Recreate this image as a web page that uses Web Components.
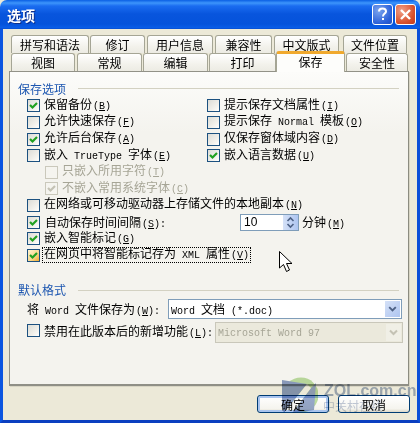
<!DOCTYPE html>
<html lang="zh">
<head>
<meta charset="utf-8">
<title>选项</title>
<style>
  html, body { margin: 0; padding: 0; background: #ece9d8; }
  body { width: 420px; height: 423px; overflow: hidden; }
</style>
</head>
<body>
<xp-window caption="选项">
  <xp-tabs></xp-tabs>
  <xp-panel>
    <xp-group label="保存选项"></xp-group>
    <xp-options>
      <xp-check checked>保留备份<x-l k>(<u>B</u>)</x-l></xp-check>
      <xp-check col="2">提示保存文档属性<x-l k>(<u>I</u>)</x-l></xp-check>
      <xp-check>允许快速保存<x-l k>(<u>F</u>)</x-l></xp-check>
      <xp-check col="2">提示保存 <x-l>Normal</x-l> 模板<x-l k>(<u>O</u>)</x-l></xp-check>
      <xp-check checked>允许后台保存<x-l k>(<u>A</u>)</x-l></xp-check>
      <xp-check col="2">仅保存窗体域内容<x-l k>(<u>D</u>)</x-l></xp-check>
      <xp-check>嵌入 <x-l>TrueType</x-l> 字体<x-l k>(<u>E</u>)</x-l></xp-check>
      <xp-check col="2" checked>嵌入语言数据<x-l k>(<u>U</u>)</x-l></xp-check>
      <xp-check indent disabled wide>只嵌入所用字符<x-l k>(<u>T</u>)</x-l></xp-check>
      <xp-check indent disabled checked wide>不嵌入常用系统字体<x-l k>(<u>C</u>)</x-l></xp-check>
      <xp-check wide>在网络或可移动驱动器上存储文件的本地副本<x-l k>(<u>N</u>)</x-l></xp-check>
      <xp-autosave></xp-autosave>
      <xp-check wide checked>嵌入智能标记<x-l k>(<u>G</u>)</x-l></xp-check>
      <xp-check wide checked focused>在网页中将智能标记存为 <x-l>XML</x-l> 属性<x-l k>(<u>V</u>)</x-l></xp-check>
    </xp-options>
    <xp-group label="默认格式" class="second"></xp-group>
    <xp-defaults></xp-defaults>
  </xp-panel>
  <xp-footer></xp-footer>
</xp-window>
<xp-overlay></xp-overlay>

<script>
// word-spacing brings the 7.2px mono space down to the 6px half width of simsun
const FONT = `12px "Liberation Mono", "Noto Sans CJK SC", monospace; word-spacing: -1.2px`;

// latin runs: simsun half width is 6px so mono at 10px
class XL extends HTMLElement {
  constructor() {
    super();
    this.attachShadow({ mode: "open" }).innerHTML =
      `<style>:host { display: inline; font: 10px "Liberation Mono", monospace; word-spacing: 0; } :host([k]) { margin-left: 1px; }</style><slot></slot>`;
  }
}
customElements.define("x-l", XL);

class XpWindow extends HTMLElement {
  constructor() {
    super();
    this.attachShadow({ mode: "open" }).innerHTML = `
      <style>
        :host { display: flex; flex-direction: column; width: 420px; height: 423px; box-sizing: border-box;
          background: #ece9d8; font: ${FONT}; color: #000; }
        .title { height: 29px; flex: none; display: flex; align-items: center; padding: 0 4px 0 7px;
          background: linear-gradient(#0a5fe4 0, #3d95fb 3px, #1a6cf0 6px, #0855dd 14px, #0553db 24px, #0a5ee8 28px, #0648c8 29px);
          border-radius: 7px 7px 0 0; }
        .cap { flex: 1; color: #fff; font: bold 14px "Noto Sans CJK SC", sans-serif; text-shadow: 1px 1px 0 #0f2f8a; }
        .btn { width: 21px; height: 21px; box-sizing: border-box; border: 1px solid #fff; border-radius: 3px; margin-left: 2px; }
        .help { background: radial-gradient(circle at 30% 30%, #7ba4ee, #2a5fd8 70%, #2350c0); }
        .close { background: radial-gradient(circle at 30% 30%, #f0a088, #d9512c 65%, #c23a1a); }
        .btn svg { display: block; width: 19px; height: 19px; }
        .frame { flex: 1; display: flex; flex-direction: column; min-height: 0; box-sizing: border-box;
          border-left: 3px solid #0b55e0; border-right: 3px solid #0b4fd8; border-bottom: 3px solid #0a3fc0; padding: 6px 8px 0 6px; }
      </style>
      <div class="title">
        <span class="cap">${this.getAttribute("caption") || ""}</span>
        <div class="btn help"><svg viewBox="0 0 19 19"><path d="M6 6.5C6 4.5 7.5 3.5 9.5 3.5S13 4.6 13 6.4C13 8.4 10 8.8 10 11.4" fill="none" stroke="#fff" stroke-width="2"/><rect x="9" y="13" width="2" height="2" fill="#fff"/></svg></div>
        <div class="btn close"><svg viewBox="0 0 19 19"><path d="M5 5L14 14M14 5L5 14" stroke="#fff" stroke-width="2.4"/></svg></div>
      </div>
      <div class="frame"><slot></slot></div>`;
  }
}
customElements.define("xp-window", XpWindow);

class XpTabs extends HTMLElement {
  constructor() {
    super();
    // label, width, space after
    const row1 = [["拼写和语法", 78, 1], ["修订", 55, 2], ["用户信息", 66, 2], ["兼容性", 57, 2], ["中文版式", 65, 4], ["文件位置", 64, 0]];
    const row2 = [["视图", 64, 2], ["常规", 65, 1], ["编辑", 65, 1], ["打印", 67, 0], ["保存", 69, 1], ["安全性", 62, 0]];
    const tabs = r => r.map(([t, w, m]) => `<div class="tab${t === "保存" ? " on" : ""}" style="width:${w}px;margin-right:${m}px">${t}</div>`).join("");
    this.attachShadow({ mode: "open" }).innerHTML = `
      <style>
        :host { display: block; height: 36px; flex: none; position: relative; z-index: 1; }
        .row { display: flex; height: 18px; padding-left: 2px; }
        .tab { box-sizing: border-box; height: 18px; display: flex; align-items: center; justify-content: center;
          border: 1px solid #a5a595; border-bottom: 0; border-radius: 3px 3px 0 0;
          background: linear-gradient(#fff, #f3f2ec 60%, #ecebe3); font: ${FONT}; }
        .tab.on { height: 21px; margin-top: -2px; background: #fdfdfb; border-top: 3px solid #f0a92e; position: relative; z-index: 2; padding-bottom: 2px; }
      </style>
      <div class="row">${tabs(row1)}</div>
      <div class="row">${tabs(row2)}</div>`;
  }
}
customElements.define("xp-tabs", XpTabs);

class XpPanel extends HTMLElement {
  constructor() {
    super();
    this.attachShadow({ mode: "open" }).innerHTML = `
      <style>
        :host { display: block; box-sizing: border-box; width: 400px; height: 315px; flex: none;
          background: linear-gradient(#fcfcfa, #f4f3ee 60px);
          border: 1px solid #929288; border-right-color: #8b8b80; border-bottom: 2px solid #8f8f86;
          box-shadow: 1px 1px 0 #d8d5c4; padding: 8px 0 0 8px; }
      </style><slot></slot>`;
  }
}
customElements.define("xp-panel", XpPanel);

class XpGroup extends HTMLElement {
  constructor() {
    super();
    this.attachShadow({ mode: "open" }).innerHTML = `
      <style>
        :host { display: flex; align-items: center; height: 17px; width: 381px; }
        :host(.second) { margin-top: 18.4px; }
        span { color: #1c56b0; font: ${FONT}; }
        i { flex: 1; height: 1px; background: #d3d1c2; margin-left: 12px; }
      </style>
      <span>${this.getAttribute("label")}</span><i></i>`;
  }
}
customElements.define("xp-group", XpGroup);

class XpOptions extends HTMLElement {
  constructor() {
    super();
    this.attachShadow({ mode: "open" }).innerHTML = `
      <style>
        :host { display: grid; grid-template-columns: 180px 1fr; grid-auto-rows: 16.6px; margin: .6px 0 0 9px; }
      </style><slot></slot>`;
  }
}
customElements.define("xp-options", XpOptions);

class XpBox extends HTMLElement {
  constructor() {
    super();
    const on = this.hasAttribute("checked");
    this.attachShadow({ mode: "open" }).innerHTML = `
      <style>
        :host { display: block; width: 13px; height: 13px; flex: none; }
        .b { box-sizing: border-box; width: 13px; height: 13px; border: 1px solid #1c5180;
          background: linear-gradient(135deg, #dcdcd6, #f4f3ee 70%, #fff); }
        :host([hot]) .b { background: linear-gradient(135deg, #fff3d0, #f8d78a 60%, #f0a92e); }
        :host([disabled]) .b { border-color: #cac8bb; background: #f5f4ef; }
        svg { display: block; width: 11px; height: 11px; }
      </style>
      <div class="b">${on ? `<svg viewBox="0 0 11 11"><path d="M2 5L4.5 7.5L9 3" fill="none" stroke="${this.hasAttribute("disabled") ? "#c4c2b4" : "#21a121"}" stroke-width="2.2"/></svg>` : ""}</div>`;
  }
}
customElements.define("xp-box", XpBox);

class XpCheck extends HTMLElement {
  constructor() {
    super();
    const attr = n => this.hasAttribute(n) ? n : "";
    this.attachShadow({ mode: "open" }).innerHTML = `
      <style>
        :host { display: flex; align-items: center; gap: 3px; height: 100%; white-space: nowrap; font: ${FONT}; grid-column: 1; }
        :host([col="2"]) { grid-column: 2; }
        :host([wide]) { grid-column: 1 / -1; }
        :host([indent]) { margin-left: 18px; }
        :host([disabled]) { color: #a6a596; }
        .t { line-height: 14px; padding: 0 1px; }
        :host([focused]) .t { outline: 1px dotted #000; }
      </style>
      <xp-box ${attr("checked")} ${attr("disabled")} ${this.hasAttribute("focused") ? "hot" : ""}></xp-box>
      <span class="t"><slot></slot></span>`;
  }
}
customElements.define("xp-check", XpCheck);

class XpSpin extends HTMLElement {
  constructor() {
    super();
    this.attachShadow({ mode: "open" }).innerHTML = `
      <style>
        :host { display: flex; box-sizing: border-box; width: 59px; height: 17px; border: 1px solid #7f9db9; background: #fff; flex: none; }
        span { flex: 1; font: 12px "Liberation Sans", sans-serif; line-height: 15px; padding-left: 3px; }
        .u { width: 15px; background: linear-gradient(90deg, #d5e1f7, #aec5f0); }
        svg { display: block; }
      </style>
      <span><slot></slot></span>
      <div class="u"><svg width="15" height="15" viewBox="0 0 15 15"><path d="M4.5 6L7.5 3L10.5 6M4.5 9L7.5 12L10.5 9" fill="none" stroke="#4d6185" stroke-width="1.6"/></svg></div>`;
  }
}
customElements.define("xp-spin", XpSpin);

class XpAutosave extends HTMLElement {
  constructor() {
    super();
    this.attachShadow({ mode: "open" }).innerHTML = `
      <style>
        :host { display: flex; align-items: center; grid-column: 1 / -1; height: 100%; white-space: nowrap; font: ${FONT}; }
        .gap { width: 200px; flex: none; padding-left: 5px; box-sizing: border-box; }
        .after { margin-left: 3px; }
      </style>
      <xp-box checked></xp-box>
      <span class="gap">自动保存时间间隔<x-l k>(<u>S</u>):</x-l></span>
      <xp-spin>10</xp-spin>
      <span class="after">分钟<x-l k>(<u>M</u>)</x-l></span>`;
  }
}
customElements.define("xp-autosave", XpAutosave);

class XpSelect extends HTMLElement {
  constructor() {
    super();
    this.attachShadow({ mode: "open" }).innerHTML = `
      <style>
        :host { display: flex; box-sizing: border-box; border: 1px solid #7f9db9; background: #fff; white-space: nowrap; font: ${FONT}; }
        :host([disabled]) { border-color: #c9c7ba; background: #ebe9dc; color: #a6a596; }
        .v { flex: 1; display: flex; align-items: center; padding-left: 2px; }
        .a { width: 15px; margin: 1px; background: linear-gradient(135deg, #d5e1f7, #aec5f0); }
        :host([disabled]) .a { background: #f0efe6; }
        svg { display: block; width: 15px; height: 100%; }
      </style>
      <div class="v"><span><slot></slot></span></div>
      <div class="a"><svg viewBox="0 0 15 17"><path d="M4 6.5L7.5 10L11 6.5" fill="none" stroke="${this.hasAttribute("disabled") ? "#c4c2b4" : "#4d6185"}" stroke-width="2"/></svg></div>`;
  }
}
customElements.define("xp-select", XpSelect);

class XpDefaults extends HTMLElement {
  constructor() {
    super();
    this.attachShadow({ mode: "open" }).innerHTML = `
      <style>
        :host { display: grid; grid-template-rows: 21px 22px; row-gap: 2px; margin-left: 9px; white-space: nowrap; font: ${FONT}; }
        .r { display: flex; align-items: center; }
        .l1 { width: 141px; flex: none; }
        .w1 { width: 234px; height: 20px; }
        .l2 { display: flex; align-items: center; gap: 4px; width: 188px; flex: none; padding-bottom: 4px; box-sizing: border-box; }
        .w2 { width: 188px; height: 21px; }
      </style>
      <div class="r"><span class="l1">将 <x-l>Word</x-l> 文件保存为<x-l k>(<u>W</u>):</x-l></span><xp-select class="w1"><x-l>Word</x-l> 文档 <x-l>(*.doc)</x-l></xp-select></div>
      <div class="r"><span class="l2"><xp-box></xp-box><span>禁用在此版本后的新增功能<x-l k>(<u>L</u>):</x-l></span></span><xp-select class="w2" disabled><x-l>Microsoft Word 97</x-l></xp-select></div>`;
  }
}
customElements.define("xp-defaults", XpDefaults);

class XpFooter extends HTMLElement {
  constructor() {
    super();
    this.attachShadow({ mode: "open" }).innerHTML = `
      <style>
        :host { display: flex; justify-content: flex-end; gap: 9px; margin: 9px -1px 0 0; }
        button { box-sizing: border-box; width: 72px; height: 18px; padding: 0; font: ${FONT}; color: #000;
          border: 1px solid #003c74; border-radius: 3px; background: linear-gradient(#fff, #f5f4ee 80%, #dcd8c8); }
        .def { box-shadow: inset 0 0 0 2px #a9c4ee; }
      </style>
      <button class="def">确定</button><button>取消</button>`;
  }
}
customElements.define("xp-footer", XpFooter);

// mouse pointer and the site watermark lie over the dialog
class XpOverlay extends HTMLElement {
  constructor() {
    super();
    this.attachShadow({ mode: "open" }).innerHTML = `
      <style>
        :host { display: block; position: absolute; left: 0; top: 0; width: 420px; height: 423px; pointer-events: none; }
        .cur { position: absolute; left: 279px; top: 251px; }
        .logo { position: absolute; left: 281px; top: 377px; mix-blend-mode: multiply; }
        .zol { position: absolute; left: 324px; top: 382px; font: bold 16px/18px "Liberation Sans", sans-serif; color: #a5b2c9; mix-blend-mode: multiply; }
        .cn { position: absolute; left: 323px; top: 399px; font: 12px/14px "Noto Sans CJK SC", sans-serif; color: #c3cbdb; mix-blend-mode: multiply; }
      </style>
      <svg class="cur" width="14" height="22" viewBox="0 0 14 22"><path d="M.5.5V17L4.5 13.5L7.5 20.5L10.5 19L7.5 12.5H13Z" fill="#fff" stroke="#000"/></svg>
      <svg class="logo" width="37" height="37" viewBox="0 0 37 37">
        <circle cx="20" cy="18" r="17.5" fill="#bfe0a4"/>
        <path d="M1 3L26 7L7 31L3 36L1 30Z" fill="#8ea0c6"/>
        <path d="M30 11L35 6L33 33L11 36Z" fill="#98aace"/>
        <path d="M26 7L30 11L11 36L3 36L7 31Z" fill="#fff"/>
      </svg>
      <span class="zol">ZOL.com.cn</span>
      <span class="cn">中关村在线</span>`;
  }
}
customElements.define("xp-overlay", XpOverlay);
</script>
</body>
</html>
